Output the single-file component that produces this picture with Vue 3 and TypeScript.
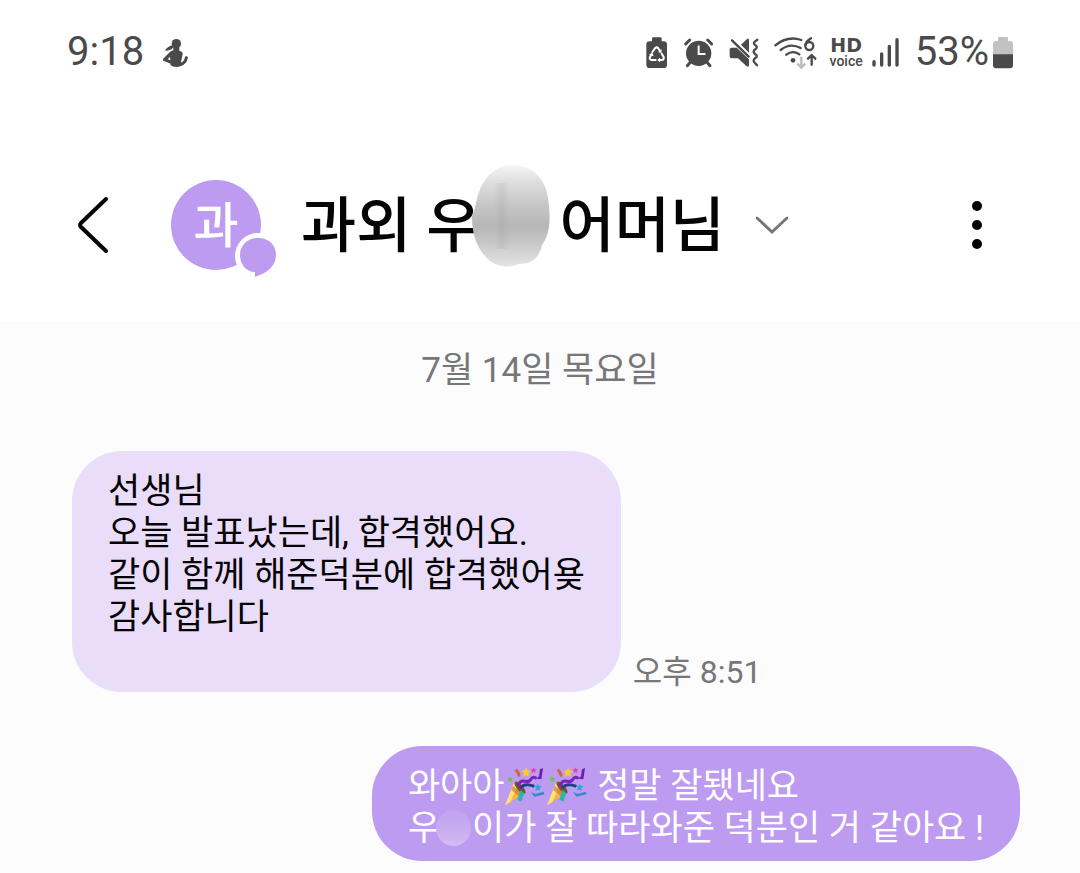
<script setup lang="ts">
interface Line {
  before: string
  masked?: boolean
  poppers?: number
  after?: string
}

interface Message {
  id: number
  mine: boolean
  time?: string
  lines: Line[]
}

const clock = '9:18'
const batteryLevel = '53%'
const dateLabel = '7월 14일 목요일'

const messages: Message[] = [
  {
    id: 1,
    mine: false,
    time: '오후 8:51',
    lines: [
      { before: '선생님' },
      { before: '오늘 발표났는데, 합격했어요.' },
      { before: '같이 함께 해준덕분에 합격했어욪' },
      { before: '감사합니다' },
      { before: '' },
    ],
  },
  {
    id: 2,
    mine: true,
    lines: [
      { before: '와아아', poppers: 2, after: ' 정말 잘됐네요' },
      { before: '우', masked: true, after: '이가 잘 따라와준 덕분인 거 같아요 !' },
    ],
  },
]
</script>

<template>
  <div class="phone">
    <div class="status">
      <span class="clock">{{ clock }}</span>
      <svg class="figure" viewBox="336 47 84 99" width="28" height="33" aria-hidden="true">
        <circle cx="379" cy="70" r="14" />
        <path d="M369 75 C358 76 350 82 345 91 C355 92 365 88 371 81Z" />
        <path d="M370 78 H388 V91 C397 93 400 98 397 106 L393 124 L397 134 C388 142 370 142 361 134 L362 130 L340 121 L339 116 L359 96 C362 92 366 91 370 90Z" />
        <path class="dark-line" d="M390 133 Q406 129 409 112" />
        <path class="cut" d="M360 109 L353 117 L361 120Z" />
      </svg>

      <div class="indicators">
        <svg viewBox="42 46 78 99" width="26" height="33" aria-hidden="true">
          <path d="M70 50H91Q95 50 95 54V62H101Q111 62 111 72V132Q111 142 101 142H59Q49 142 49 132V72Q49 62 59 62H66V54Q66 50 70 50Z" />
          <g class="light-line">
            <path d="M67 94 L76 82 Q80 78 84 82 L91 92" />
            <path d="M95 99 L101 109 Q103 117 95 118 H87" />
            <path d="M77 118 H64 Q57 116 60 109 L65 101" />
          </g>
          <path class="cut" d="M84 95 L94 96 L95 85Z M90 111 L82 118 L90 125Z M57 102 L67 96 L71 107Z" />
        </svg>
        <svg viewBox="156 46 102 99" width="34" height="33" aria-hidden="true">
          <circle cx="206" cy="98" r="38" />
          <path class="dark-line" d="M167 70L179 58M233 58L245 70M181 125L172 135M231 125L240 135" />
          <path class="light-line" d="M206 77V100H224" />
        </svg>
        <svg viewBox="294 46 96 99" width="32" height="33" aria-hidden="true">
          <path d="M333 72 L351 55 Q357 51 357 60 V96Z" />
          <path d="M304 81 H320 L357 116 V132 Q357 142 348 135 L324 113 H307 Q299 113 299 106 V86 Q299 81 304 81Z" />
          <path class="dark-line slash" d="M306 59L356 108" />
          <path class="dark-line wave" d="M382 57 Q367 66 374 72 Q386 79 376 86 Q367 92 374 99 Q386 106 376 112 Q367 119 374 126 L381 134" />
        </svg>
        <svg viewBox="426 46 138 99" width="46" height="33" aria-hidden="true">
          <path class="dark-line wifi" d="M436 74 Q472 44 514 58M452 88 Q480 65 512 82M469 102 Q488 87 508 101" />
          <circle cx="489" cy="119" r="7" />
          <path class="dark-line wifi" d="M543 53 Q530 60 526 73" />
          <circle class="dark-line wifi" cx="538" cy="76" r="12" />
          <path class="faint-line" d="M514 108V140M502 129L514 141L526 129" />
          <path class="dark-line wifi" d="M545 132V104M534 114L545 103L556 114" />
        </svg>
        <span class="hd"><b>HD</b><span>voice</span></span>
      </div>
      <svg class="signal" viewBox="156 46 102 99" width="34" height="33" aria-hidden="true">
        <path class="dark-line bars" d="M162 123V133M185 100V133M208 77V133M231 57V133" />
      </svg>
      <div class="battery">
        <span>{{ batteryLevel }}</span>
        <svg viewBox="519 46 63 99" width="21" height="33" aria-hidden="true">
          <path class="empty" d="M538 49H560Q564 49 564 53V61H570Q579 61 579 70V104H519V70Q519 61 528 61H534V53Q534 49 538 49Z" />
          <path d="M519 101H579V134Q579 143 570 143H528Q519 143 519 134Z" />
        </svg>
      </div>
    </div>

    <header class="header">
      <button class="back" type="button" aria-label="뒤로">
        <svg viewBox="0 0 40 64" width="40" height="64" aria-hidden="true">
          <path d="M34 6L9 30Q7 32 9 34L34 58" />
        </svg>
      </button>
      <div class="avatar">
        <span>과</span>
        <svg class="badge" viewBox="0 0 48 48" width="48" height="48" aria-hidden="true">
          <circle class="ring" cx="24" cy="24" r="23" />
          <path d="M24 6C35 6 42 13 42 23C42 34 33 41 21 45V40C12 40 6 32 6 23C6 13 14 6 24 6Z" />
        </svg>
      </div>
      <h1 class="title">
        <span>과외 우</span><span class="mask"><svg class="smudge" viewBox="0 0 78 102" width="78" height="102" aria-hidden="true">
          <defs>
            <linearGradient id="smudge-fill" x1="0" y1="0" x2="0" y2="1">
              <stop offset="0" stop-color="#f6f6f6" />
              <stop offset="0.15" stop-color="#e0e0e0" />
              <stop offset="0.4" stop-color="#c6c6c6" />
              <stop offset="0.6" stop-color="#b7b7b7" />
              <stop offset="0.75" stop-color="#c5c5c5" />
              <stop offset="1" stop-color="#e4e4e4" />
            </linearGradient>
            <linearGradient id="smudge-shade">
              <stop offset="0" stop-color="#888" stop-opacity="0" />
              <stop offset="0.5" stop-color="#888" stop-opacity="0.15" />
              <stop offset="1" stop-color="#888" stop-opacity="0" />
            </linearGradient>
          </defs>
          <path fill="url(#smudge-fill)" d="M40 0C62 0 76 15 77 42C79 60 76 72 70 80C67 92 61 99 47 99C34 104 21 101 13 91C3 80 0 66 0 51C5 40 4 30 11 18C18 7 28 0 40 0Z" />
          <path fill="url(#smudge-shade)" d="M22 18H38V84H22Z" />
        </svg></span><span> 어머님</span>
      </h1>
      <button class="expand" type="button" aria-label="펼치기">
        <svg viewBox="0 0 32 20" width="32" height="20" aria-hidden="true"><path d="M1 3L16 17L31 3" /></svg>
      </button>
      <button class="more" type="button" aria-label="더보기">
        <svg viewBox="0 0 40 56" width="40" height="56" aria-hidden="true">
          <circle cx="20" cy="9" r="5" />
          <circle cx="20" cy="28" r="5" />
          <circle cx="20" cy="47" r="5" />
        </svg>
      </button>
    </header>

    <main class="chat">
      <p class="date">{{ dateLabel }}</p>
      <div v-for="message in messages" :key="message.id" class="row" :class="{ mine: message.mine }">
        <div class="bubble">
          <p v-for="(line, index) in message.lines" :key="index">
            <span>{{ line.before }}</span>
            <svg v-for="n in line.poppers ?? 0" :key="n" class="popper" viewBox="436 90 126 120" width="42" height="40" role="img" aria-label="파티">
              <path fill="#f6b73c" d="M439 208L467 138Q482 139 498 170Z" />
              <path fill="#ffe07a" d="M439 208L467 138L477 149L455 198Z" />
              <path fill="#b8682e" d="M463 150L492 174L483 182L458 162Z" opacity=".55" />
              <ellipse cx="484" cy="155" rx="9" ry="23" transform="rotate(-42 484 155)" fill="#775032" />
              <path d="M471 101Q480 108 482 122" fill="none" stroke="#cf633e" stroke-width="8" />
              <path d="M479 150Q482 132 499 136Q512 139 518 128Q525 119 534 128" fill="none" stroke="#7d22bd" stroke-width="9" />
              <path d="M534 128L548 130L553 96L544 100L541 121Z" fill="#691bb6" />
              <path d="M485 157Q496 139 527 151" fill="none" stroke="#243e86" stroke-width="9" />
              <path d="M486 162L497 172L488 197L476 191Z" fill="#26b7b2" />
              <path d="M517 167L530 174L555 167L557 175L527 182Z" fill="#3389cb" />
              <path d="M503 95L507 103L516 105L510 112L511 122L502 118L493 122L495 112L488 105L498 103Z" fill="#ffc928" />
              <path d="M538 143L541 149L549 151L543 156L544 164L537 161L530 164L532 156L526 151L534 149Z" fill="#30a9dc" />
              <path d="M524 94L528 100L534 100L529 105L530 111L524 108L518 111L520 105L516 101L522 100Z" fill="#e83eaa" />
              <path d="M453 121L457 126L464 126L460 132L461 138L455 135L448 138L450 131L446 127L452 126Z" fill="#72bf4f" />
            </svg><span v-if="line.masked" class="mask"><span class="veil"></span></span><span v-if="line.after" class="after">{{ line.after }}</span>
          </p>
        </div>
        <time v-if="message.time" class="time">{{ message.time }}</time>
      </div>
    </main>
  </div>
</template>

<style>
body {
  margin: 0;
  background: #fcfcfd;
}
</style>

<style scoped>
.phone {
  font-family: Roboto, "Noto Sans CJK KR", sans-serif;
  color: #050505;
}

svg {
  flex: none;
  display: block;
}

button {
  padding: 0;
  border: 0;
  background: none;
  cursor: pointer;
}

.status {
  display: flex;
  align-items: center;
  height: 48px;
  padding: 28px 66px 0 67px;
  background: #fff;
  color: #4a4a4a;
  fill: #4a4a4a;
}

.clock,
.battery {
  font-size: 40px;
  line-height: 48px;
}

.figure {
  margin-left: 18px;
}

.cut {
  fill: #fff;
}

.light-line {
  fill: none;
  stroke: #fff;
  stroke-width: 6;
  stroke-linecap: round;
}

.dark-line {
  fill: none;
  stroke: #4a4a4a;
  stroke-width: 9;
  stroke-linecap: round;
  stroke-linejoin: round;
}

.slash,
.wave,
.wifi {
  stroke-width: 7;
}

.bars {
  stroke-width: 10;
}

.faint-line {
  fill: none;
  stroke: #bcbcbc;
  stroke-width: 7;
}

.empty {
  fill: #c2c2c2;
}

.indicators {
  display: flex;
  align-items: center;
  gap: 12px;
  margin-left: auto;
}

.hd {
  display: flex;
  flex-direction: column;
  align-items: center;
  font-weight: 500;
  font-size: 14px;
  line-height: 14px;
}

.hd b {
  font-family: "DejaVu Sans", sans-serif;
  font-size: 19px;
  line-height: 18px;
}

.signal {
  margin: 0 9px;
}

.battery {
  display: flex;
  align-items: center;
  gap: 4px;
}

.header {
  display: flex;
  align-items: center;
  height: 110px;
  padding: 94px 83px 41px 72px;
  background: #fff;
}

.back path,
.expand path {
  fill: none;
  stroke: #050505;
  stroke-width: 4;
  stroke-linecap: round;
}

.avatar {
  position: relative;
  flex: none;
  box-sizing: border-box;
  width: 90px;
  height: 90px;
  margin-left: 59px;
  padding-top: 2px;
  border-radius: 50%;
  background: #bc9bf0;
  color: #fff;
  font-size: 49px;
  font-weight: 500;
  line-height: 90px;
  text-align: center;
}

.badge {
  position: absolute;
  right: -21px;
  bottom: -10px;
  fill: #bc9bf0;
}

.ring {
  fill: #fff;
}

.title {
  display: flex;
  margin: 0 0 0 40px;
  padding-top: 4px;
  font-size: 60px;
  font-weight: 500;
  line-height: 80px;
  white-space: pre;
}

.mask {
  position: relative;
  display: inline-block;
  width: 63px;
}

.smudge {
  position: absolute;
  top: -22px;
  left: -10px;
}

.expand {
  margin-left: 31px;
}

.expand path {
  stroke: #777;
  stroke-width: 3;
}

.more {
  margin-left: auto;
}

.chat {
  padding: 26px 60px 0 72px;
}

.date {
  margin: 0 12px 56px 0;
  font-size: 35px;
  line-height: 48px;
  text-align: center;
}

.date,
.time {
  color: #777;
}

.row {
  display: flex;
  align-items: flex-end;
  gap: 12px;
}

.row + .row {
  margin-top: 54px;
}

.mine {
  justify-content: flex-end;
}

.bubble {
  padding: 20px 36px 11px;
  border-radius: 50px;
  background: #e9ddf9;
  font-size: 35px;
  line-height: 42px;
}

.mine .bubble {
  background: #bc9bf0;
  color: #fff;
}

.bubble p {
  display: flex;
  align-items: center;
  min-height: 42px;
  margin: 0;
  white-space: pre;
}

.popper {
  margin-bottom: 2px;
}

.bubble .mask {
  width: 32px;
  height: 42px;
}

.veil {
  position: absolute;
  top: 2px;
  left: -4px;
  width: 35px;
  height: 36px;
  border-radius: 50%;
  background: linear-gradient(#c0a2f0, #c9aeef 60%, #d3bcf3);
}

.time {
  font-size: 32px;
  line-height: 40px;
}
</style>
